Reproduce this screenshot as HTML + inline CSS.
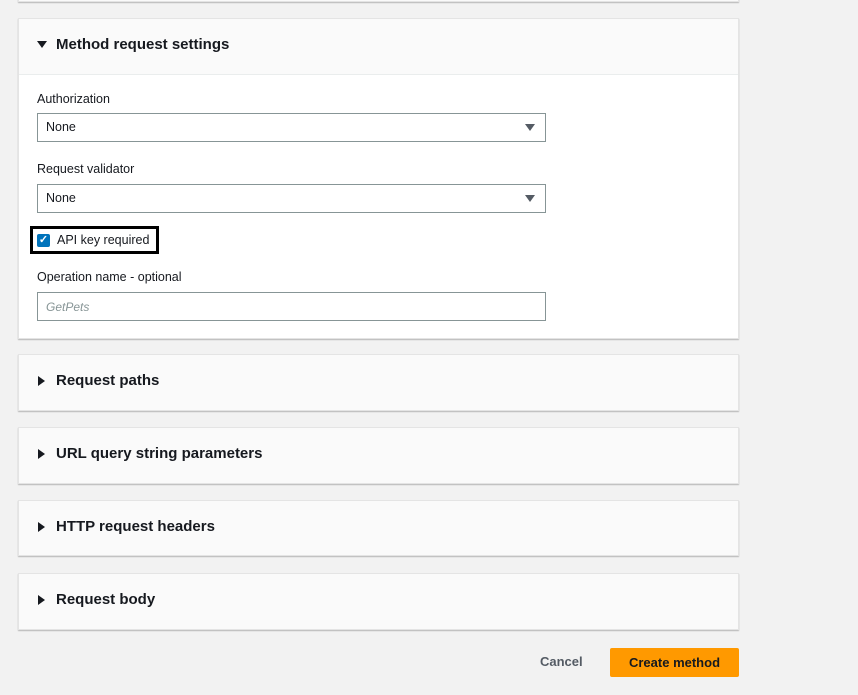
<!DOCTYPE html>
<html><head><style>
*{box-sizing:border-box;margin:0;padding:0}
body{width:858px;height:695px;background:#f2f2f2;font-family:"Liberation Sans",Arial,sans-serif;position:relative;overflow:hidden;color:#16191f}
.card{position:absolute;left:18px;width:721px;background:#fafafa;border:1px solid #e4e4e4;box-shadow:0 1px 1px rgba(0,0,0,.25)}
.hd{position:absolute;left:37px;font-weight:bold;font-size:15px}
.tri{position:absolute;width:0;height:0}
.lbl{position:absolute;left:37px;font-size:12.5px}
.sel{position:absolute;left:37px;width:509px;height:29px;border:1px solid #879596;background:#fff;font-size:12.5px;padding:6px 8px}
.arr:after{content:"";position:absolute;right:10px;top:10px;border-left:5px solid transparent;border-right:5px solid transparent;border-top:7px solid #545b64}
</style></head><body>
<div class="card" style="top:-10px;height:12px"></div>
<div class="card" style="top:18px;height:321px;background:#fff">
 <div style="height:56px;background:#fafafa;border-bottom:1px solid #eaeded"></div>
</div>
<div class="tri" style="left:37px;top:41px;border-left:5px solid transparent;border-right:5px solid transparent;border-top:7px solid #16191f"></div>
<div class="hd" style="left:56px;top:36px">Method request settings</div>
<div class="lbl" style="top:92px">Authorization</div>
<div class="sel arr" style="top:113px">None</div>
<div class="lbl" style="top:162px">Request validator</div>
<div class="sel arr" style="top:184px">None</div>
<div style="position:absolute;left:30px;top:226px;width:129px;height:28px;border:3px solid #000;background:#fff"></div>
<div style="position:absolute;left:37px;top:234px;width:13px;height:13px;background:#0073bb;border-radius:2px;color:#fff;font-size:11px;line-height:13px;text-align:center;font-weight:bold">✓</div>
<div class="lbl" style="left:57px;top:233px">API key required</div>
<div class="lbl" style="top:270px">Operation name - optional</div>
<div class="sel" style="top:292px;color:#879596;font-style:italic;font-size:12px;padding-top:7px">GetPets</div>

<div class="card" style="top:354px;height:57px"></div>
<div class="tri" style="left:38px;top:376px;border-top:5px solid transparent;border-bottom:5px solid transparent;border-left:7px solid #16191f"></div>
<div class="hd" style="left:56px;top:372px">Request paths</div>
<div class="card" style="top:427px;height:57px"></div>
<div class="tri" style="left:38px;top:449px;border-top:5px solid transparent;border-bottom:5px solid transparent;border-left:7px solid #16191f"></div>
<div class="hd" style="left:56px;top:445px">URL query string parameters</div>
<div class="card" style="top:500px;height:56px"></div>
<div class="tri" style="left:38px;top:522px;border-top:5px solid transparent;border-bottom:5px solid transparent;border-left:7px solid #16191f"></div>
<div class="hd" style="left:56px;top:518px">HTTP request headers</div>
<div class="card" style="top:573px;height:57px"></div>
<div class="tri" style="left:38px;top:595px;border-top:5px solid transparent;border-bottom:5px solid transparent;border-left:7px solid #16191f"></div>
<div class="hd" style="left:56px;top:591px">Request body</div>

<div style="position:absolute;left:540px;top:654px;font-size:13px;font-weight:bold;color:#545b64">Cancel</div>
<div style="position:absolute;left:610px;top:648px;width:129px;height:29px;background:#ff9900;border-radius:2px;font-size:13px;font-weight:bold;color:#16191f;text-align:center;line-height:29px">Create method</div>
</body></html>
